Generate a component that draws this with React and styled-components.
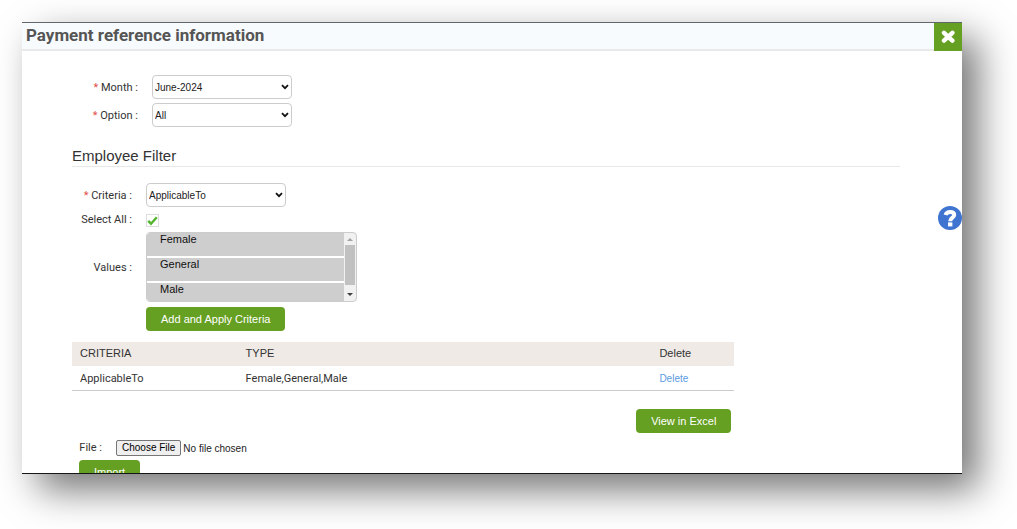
import React, { useState } from "react";
import styled, { createGlobalStyle } from "styled-components";

const GlobalStyle = createGlobalStyle`
  * {
    box-sizing: border-box;
  }
  body {
    margin: 0;
    background-color: #ffffff;
    color: #333333;
    font-family: Roboto, "Liberation Sans", sans-serif;
    font-size: 11px;
  }
`;

const Page = styled.div`
  height: 100vh;
  padding: 22px 55px 55px 22px;
  overflow: hidden;
`;

const Modal = styled.div`
  position: relative;
  height: 100%;
  background-color: #ffffff;
  box-shadow: 16px 16px 36px rgba(0, 0, 0, 0.54);
`;

const Clip = styled.div`
  height: 100%;
  overflow: hidden;
  border-top: 1px solid #62676b;
  border-bottom: 1px solid #161616;
`;

const Header = styled.div`
  display: flex;
  justify-content: space-between;
  height: 28px;
  background-color: #f8fbfd;
  border-bottom: 2px solid #e8eaea;
`;

const Title = styled.h1`
  margin: 0;
  padding-left: 4px;
  color: #555555;
  font-size: 17px;
  font-weight: 700;
  line-height: 24px;
`;

const CloseBtn = styled.button`
  display: flex;
  justify-content: center;
  align-items: center;
  width: 28px;
  height: 28px;
  padding: 0;
  border: none;
  background-color: #66a023;
  cursor: pointer;
`;

const HelpBtn = styled.button`
  position: absolute;
  top: 184px;
  right: 0;
  width: 24px;
  height: 24px;
  padding: 0;
  border: none;
  border-radius: 50%;
  background-color: #3f74d1;
  cursor: pointer;
`;

const Body = styled.div`
  padding: 24px 62px 0 50px;
`;

const Rows = styled.div`
  display: flex;
  flex-direction: column;
  gap: ${(props) => props.$gap};
`;

const Row = styled.div`
  display: flex;
  align-items: ${(props) => props.$align || "center"};
`;

const Label = styled.label`
  width: ${(props) => props.$width};
  margin-right: 14px;
  padding-top: 1px;
  line-height: 14px;
  text-align: right;
  white-space: nowrap;
`;

const Star = styled.span`
  color: #e0504a;
`;

const Select = styled.select`
  appearance: none;
  width: 140px;
  height: 24px;
  padding: 0 16px 0 2px;
  border: 1px solid #cccccc;
  border-radius: 4px;
  background: #ffffff
    url("data:image/svg+xml,%3Csvg xmlns='http://www.w3.org/2000/svg' viewBox='0 0 8 6'%3E%3Cpath d='M1 1.2L4 4.2L7 1.2' fill='none' stroke='%23111' stroke-width='1.8'/%3E%3C/svg%3E")
    right 2px center / 8px 6px no-repeat;
  color: #222222;
  font-family: "Liberation Sans", sans-serif;
  font-size: 10px;
`;

const SectionTitle = styled.h2`
  margin: 21px 0 16px;
  padding-bottom: 2px;
  border-bottom: 1px solid #e8e8e8;
  font-family: "Liberation Sans", sans-serif;
  font-size: 15px;
  font-weight: 400;
  line-height: 16px;
`;

const Check = styled.input`
  appearance: none;
  width: 13px;
  height: 13px;
  margin: 2px 0 0;
  border: 1px solid #dddddd;
  &:checked {
    background: url("data:image/svg+xml,%3Csvg xmlns='http://www.w3.org/2000/svg' viewBox='0 0 11 11'%3E%3Cpath d='M1.2 5.8l2.8 2.9L9.8 2.2' fill='none' stroke='%2354b52e' stroke-width='2.4'/%3E%3C/svg%3E")
      center / 11px no-repeat;
  }
`;

const ListFrame = styled.div`
  display: flex;
  width: 211px;
  height: 70px;
  border: 1px solid #cccccc;
  border-radius: 4px;
  background-color: #f1f1f1;
  overflow: hidden;
`;

const ListBox = styled.select`
  flex: 1;
  height: 100%;
  padding: 0;
  border: none;
  border-radius: 0;
  outline: none;
  color: #333333;
  font-family: "Liberation Sans", sans-serif;
  font-size: 10px;
  overflow-y: scroll;
  scrollbar-width: none;
`;

const Option = styled.option`
  height: 25px;
  min-height: 25px;
  padding: 0 0 0 13px;
  border-bottom: 2px solid #ffffff;
  font-size: 11px;
  line-height: 12px;
  &:checked {
    background-color: #cecece;
  }
`;

const ScrollBar = styled.div`
  display: flex;
  flex-direction: column;
  align-items: center;
  width: 12px;
`;

const ScrollArrow = styled.svg`
  width: 6px;
  height: 12px;
  fill: ${(props) => props.$color};
`;

const ScrollThumb = styled.div`
  width: 10px;
  height: 40px;
  margin-bottom: auto;
  background-color: #c1c1c1;
`;

const GreenBtn = styled.button`
  height: 24px;
  padding: 0 15px;
  border: none;
  border-radius: 4px;
  background-color: #66a023;
  color: #ffffff;
  font-family: "Liberation Sans", sans-serif;
  font-size: 11px;
  cursor: pointer;
`;

const TableArea = styled.div`
  width: 80%;
`;

const Table = styled.table`
  width: 100%;
  margin-top: 11px;
  border-collapse: collapse;
  border-bottom: 1px solid #cccccc;
  table-layout: fixed;
`;

const Th = styled.th`
  width: ${(props) => props.$width};
  height: 24px;
  padding: 0 8px 2px;
  background-color: #efeae6;
  font-family: "Liberation Sans", sans-serif;
  font-size: 11px;
  font-weight: 400;
  text-align: left;
`;

const Td = styled.td`
  height: 24px;
  padding: 1px 8px 0;
`;

const DeleteLink = styled.a`
  color: #5a9be0;
  font-family: "Liberation Sans", sans-serif;
  font-size: 10px;
  text-decoration: none;
`;

const Right = styled.div`
  display: flex;
  justify-content: flex-end;
  padding: 18px 3px 7px 0;
`;

const ImportForm = styled.div`
  display: flex;
  flex-direction: column;
  align-items: flex-start;
  gap: 4px;
  padding-left: 7px;
`;

const FileInput = styled.input`
  height: 16px;
  color: #222222;
  font-family: "Liberation Sans", sans-serif;
  font-size: 10px;
  &::file-selector-button {
    height: 16px;
    padding: 0 5px;
    border: 1px solid #767676;
    border-radius: 2px;
    margin-right: 2px;
    background-color: #efefef;
    font-family: "Liberation Sans", sans-serif;
    font-size: 10px;
  }
`;

const criteriaValues = ["Female", "General", "Male"];

const App = () => {
  const [selected, setSelected] = useState(criteriaValues);

  const onSelectAll = (e) => {
    setSelected(e.target.checked ? criteriaValues : []);
  };

  const onValuesChange = (e) => {
    setSelected(Array.from(e.target.selectedOptions, (o) => o.value));
  };

  return (
    <Page>
      <GlobalStyle />
      <Modal>
        <Clip>
          <Header>
            <Title>Payment reference information</Title>
            <CloseBtn aria-label="Close">
              <svg width="14" height="14" viewBox="0 0 14 14">
                <path
                  d="M3 2.8L11.4 10.6M11.4 2.8L3 10.6"
                  stroke="#fff"
                  strokeWidth="4.4"
                  strokeLinecap="round"
                />
              </svg>
            </CloseBtn>
          </Header>
          <Body>
            <Rows $gap="4px">
              <Row>
                <Label $width="66px" htmlFor="month">
                  <Star>*</Star> Month :
                </Label>
                <Select id="month">
                  <option>June-2024</option>
                </Select>
              </Row>
              <Row>
                <Label $width="66px" htmlFor="option">
                  <Star>*</Star> Option :
                </Label>
                <Select id="option">
                  <option>All</option>
                </Select>
              </Row>
            </Rows>
            <SectionTitle>Employee Filter</SectionTitle>
            <Rows $gap="5px">
              <Row>
                <Label $width="60px" htmlFor="criteria">
                  <Star>*</Star> Criteria :
                </Label>
                <Select id="criteria">
                  <option>ApplicableTo</option>
                </Select>
              </Row>
              <Row $align="flex-start">
                <Label $width="60px" htmlFor="all">
                  Select All :
                </Label>
                <Check
                  id="all"
                  type="checkbox"
                  checked={selected.length === criteriaValues.length}
                  onChange={onSelectAll}
                />
              </Row>
              <Row>
                <Label $width="60px" htmlFor="values">
                  Values :
                </Label>
                <ListFrame>
                  <ListBox
                    id="values"
                    multiple
                    value={selected}
                    onChange={onValuesChange}
                  >
                    {criteriaValues.map((value) => (
                      <Option key={value} value={value}>
                        {value}
                      </Option>
                    ))}
                  </ListBox>
                  <ScrollBar aria-hidden="true">
                    <ScrollArrow viewBox="0 0 6 12" $color="#a3a3a3">
                      <path d="M0 8L3 5L6 8Z" />
                    </ScrollArrow>
                    <ScrollThumb />
                    <ScrollArrow viewBox="0 0 6 12" $color="#404040">
                      <path d="M0 4L3 7L6 4Z" />
                    </ScrollArrow>
                  </ScrollBar>
                </ListFrame>
              </Row>
              <Row>
                <Label as="span" $width="60px" />
                <GreenBtn>Add and Apply Criteria</GreenBtn>
              </Row>
            </Rows>
            <TableArea>
              <Table>
                <thead>
                  <tr>
                    <Th $width="25%">CRITERIA</Th>
                    <Th>TYPE</Th>
                    <Th $width="83px">Delete</Th>
                  </tr>
                </thead>
                <tbody>
                  <tr>
                    <Td>ApplicableTo</Td>
                    <Td>Female,General,Male</Td>
                    <Td>
                      <DeleteLink href="#delete">Delete</DeleteLink>
                    </Td>
                  </tr>
                </tbody>
              </Table>
              <Right>
                <GreenBtn>View in Excel</GreenBtn>
              </Right>
            </TableArea>
            <ImportForm>
              <Row>
                <Label $width="23px" htmlFor="file">
                  File :
                </Label>
                <FileInput id="file" type="file" />
              </Row>
              <GreenBtn>Import</GreenBtn>
            </ImportForm>
          </Body>
        </Clip>
        <HelpBtn aria-label="Help">
          <svg width="24" height="24" viewBox="0 0 24 24">
            <path
              d="M7.6 9C8.2 6.8 9.8 5.9 12.1 5.9C14.6 5.9 16.2 7.1 16.2 9C16.2 11.8 12.2 11.6 12.2 15.2"
              fill="none"
              stroke="#fff"
              strokeWidth="4"
            />
            <rect x="10" y="16.4" width="4.4" height="4" fill="#fff" />
          </svg>
        </HelpBtn>
      </Modal>
    </Page>
  );
};

export default App;
